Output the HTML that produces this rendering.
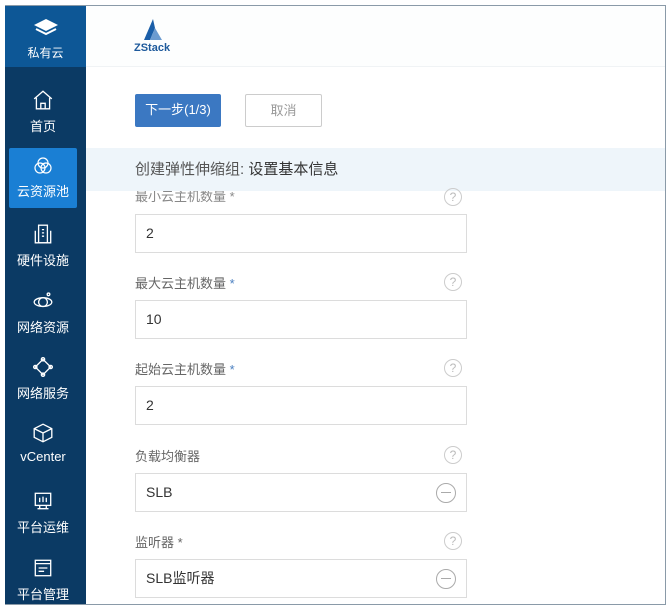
<!DOCTYPE html>
<html><head><meta charset="utf-8"><style>
*{margin:0;padding:0;box-sizing:border-box}
body{width:672px;height:609px;background:#fff;position:relative;overflow:hidden;font-family:"Liberation Sans","Noto Sans CJK SC",sans-serif}
.frame{position:absolute;left:5px;top:5px;width:661px;height:600px;border-top:1px solid #8a9aa8;border-right:1px solid #8a9aa8;border-bottom:1px solid #8a9aa8;overflow:hidden;background:#fff}
.side{position:absolute;left:0;top:0;width:81px;height:600px;background:#0b3a64}
.side .top{height:61px;background:#0d5796;text-align:center;color:#fff;font-size:12px;padding-top:12px}
.item{position:absolute;left:4px;width:68px;height:60px;text-align:center;color:#fff;font-size:13px}
.item svg{display:block;margin:0 auto 5px}
.act{background:#1a7fd4;border-radius:2px}
.hdr{position:absolute;left:81px;top:0;right:0;height:61px;background:#fdfefe;border-bottom:1px solid #f0f3f5}
.btn{position:absolute;top:88px;height:33px;font-size:13px;line-height:31px;text-align:center;border-radius:2px}
.band{position:absolute;left:81px;right:0;top:142px;height:43px;background:#eef5fa;font-size:15px;color:#555;line-height:43px;padding-left:49px}
.lbl{position:absolute;left:130px;font-size:13px;color:#666}
.lbl b{color:#4a7fc0;font-weight:normal}
.q{position:absolute;left:439px;width:18px;height:18px;border:1px solid #ccc;border-radius:50%;color:#bbb;font-size:12px;text-align:center;line-height:16px}
.fld{position:absolute;left:130px;width:332px;height:39px;border:1px solid #dcdcdc;font-size:14px;color:#333;padding-left:10px;line-height:37px;background:#fff}
.minus{position:absolute;right:10px;top:9px;width:20px;height:20px;border:1.2px solid #aaa;border-radius:50%}
.minus:after{content:"";position:absolute;left:4px;right:4px;top:8px;height:1.2px;background:#aaa}
</style></head><body>
<div class="frame">
<div class="hdr">
<svg style="position:absolute;left:56px;top:12px" width="22" height="24" viewBox="0 0 22 24"><path d="M11 1 L2 22 H8 L13 10 Z" fill="#1a5ea8"/><path d="M13 10 L20 22 H8 Z" fill="#6b9bd0"/></svg>
<div style="position:absolute;left:48px;top:36px;font-size:11px;font-weight:bold;color:#1e5a9c">ZStack</div>
</div>
<div class="btn" style="left:130px;width:86px;background:#3b78c2;color:#fff">下一步(1/3)</div>
<div class="btn" style="left:240px;width:77px;border:1px solid #ccc;color:#999;background:#fff">取消</div>
<div class="lbl" style="top:180px;color:#888">最小云主机数量 *</div>
<div class="band">创建弹性伸缩组: <span style="color:#333">设置基本信息</span></div>
<div class="q" style="top:182px">?</div>
<div class="fld" style="top:208px">2</div>
<div class="lbl" style="top:267px">最大云主机数量 <b>*</b></div><div class="q" style="top:267px">?</div>
<div class="fld" style="top:294px">10</div>
<div class="lbl" style="top:353px">起始云主机数量 <b>*</b></div><div class="q" style="top:353px">?</div>
<div class="fld" style="top:380px">2</div>
<div class="lbl" style="top:440px">负载均衡器</div><div class="q" style="top:440px">?</div>
<div class="fld" style="top:467px">SLB<div class="minus"></div></div>
<div class="lbl" style="top:526px">监听器 *</div><div class="q" style="top:526px">?</div>
<div class="fld" style="top:553px">SLB监听器<div class="minus"></div></div>
<div class="side">
<div class="top"><svg width="26" height="20" viewBox="0 0 26 20" style="display:block;margin:0 auto 6px"><path d="M13 1 L25 7 L13 13 L1 7Z" fill="#fff"/><path d="M3 11 L13 16 L23 11" stroke="#fff" stroke-width="2" fill="none"/></svg>私有云</div>
<div class="item" style="top:83px"><svg width="22" height="22" viewBox="0 0 20 20" fill="none" stroke="#fff" stroke-width="1.2"><path d="M2 9 L10 2 L18 9 M4 8 V18 H16 V8 M8 18 V13 H12 V18"/></svg>首页</div>
<div class="item act" style="top:142px;padding-top:8px"><svg width="20" height="20" viewBox="0 0 20 20" fill="none" stroke="#fff" stroke-width="1.2"><circle cx="10" cy="7" r="5"/><circle cx="7" cy="12" r="5"/><circle cx="13" cy="12" r="5"/></svg>云资源池</div>
<div class="item" style="top:217px"><svg width="22" height="22" viewBox="0 0 20 20" fill="none" stroke="#fff" stroke-width="1.2"><rect x="6" y="2" width="8" height="16"/><path d="M3 7 V18 H17 V7 M9 6h2M9 9h2M9 12h2"/></svg>硬件设施</div>
<div class="item" style="top:284px"><svg width="22" height="22" viewBox="0 0 20 20" fill="none" stroke="#fff" stroke-width="1.2"><ellipse cx="10" cy="11" rx="8" ry="4"/><circle cx="10" cy="11" r="4"/><circle cx="15" cy="4" r="1.2"/></svg>网络资源</div>
<div class="item" style="top:350px"><svg width="22" height="22" viewBox="0 0 20 20" fill="none" stroke="#fff" stroke-width="1.2"><path d="M10 3 L17 10 L10 17 L3 10Z"/><circle cx="10" cy="3" r="1.5"/><circle cx="17" cy="10" r="1.5"/><circle cx="10" cy="17" r="1.5"/><circle cx="3" cy="10" r="1.5"/></svg>网络服务</div>
<div class="item" style="top:416px"><svg width="22" height="22" viewBox="0 0 20 20" fill="none" stroke="#fff" stroke-width="1.2"><path d="M10 2 L18 6 V14 L10 18 L2 14 V6Z M2 6 L10 10 L18 6 M10 10 V18"/></svg>vCenter</div>
<div class="item" style="top:484px"><svg width="22" height="22" viewBox="0 0 20 20" fill="none" stroke="#fff" stroke-width="1.2"><rect x="3" y="3" width="14" height="11"/><path d="M7 14 V17 M13 14 V17 M5 17 H15 M7 7 V11 M10 6 V11 M13 7 V11"/></svg>平台运维</div>
<div class="item" style="top:551px"><svg width="22" height="22" viewBox="0 0 20 20" fill="none" stroke="#fff" stroke-width="1.2"><rect x="3" y="3" width="14" height="14"/><path d="M3 6 H17 M6 10 H14 M6 13 H11"/></svg>平台管理</div>
</div>
</div>
</body></html>
